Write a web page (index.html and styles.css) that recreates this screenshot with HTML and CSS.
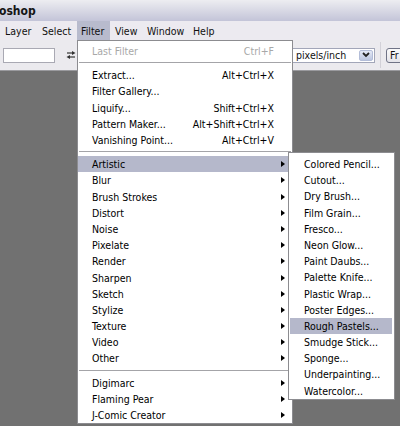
FILE: index.html
```html
<!DOCTYPE html>
<html>
<head>
<meta charset="utf-8">
<title>Filter menu</title>
<link rel="stylesheet" href="styles.css">
</head>
<body>
<div class="app">
  <div class="titlebar"><span class="title">oshop</span></div>
  <div class="menubar">
    <span class="mb-item">Layer</span>
    <span class="mb-item">Select</span>
    <span class="mb-item active">Filter</span>
    <span class="mb-item">View</span>
    <span class="mb-item">Window</span>
    <span class="mb-item">Help</span>
  </div>
  <div class="toolbar">
    <div class="field"></div>
    <svg class="swap" width="10" height="10" viewBox="0 0 10 10">
      <path d="M1 3H8" stroke="#333" stroke-width="1.2"/>
      <path d="M6 1L9.5 3L6 5Z" fill="#333"/>
      <path d="M2 7H9" stroke="#333" stroke-width="1.2"/>
      <path d="M4 5L0.5 7L4 9Z" fill="#333"/>
    </svg>
    <div class="select">
      <span class="select-text">pixels/inch</span>
      <span class="dd">
        <svg width="8" height="6" viewBox="0 0 8 6"><path d="M1 1L4 4L7 1" fill="none" stroke="#222" stroke-width="1.8"/></svg>
      </span>
    </div>
    <div class="tsep"></div>
    <div class="btn">Fr</div>
  </div>
  <div class="workspace"></div>

  <div class="menu main">
    <div class="mi disabled"><span class="label">Last Filter</span><span class="key">Ctrl+F</span><span class="arrcol"></span></div>
    <div class="sep"></div>
    <div class="mi"><span class="label">Extract...</span><span class="key">Alt+Ctrl+X</span><span class="arrcol"></span></div>
    <div class="mi"><span class="label">Filter Gallery...</span><span class="key"></span><span class="arrcol"></span></div>
    <div class="mi"><span class="label">Liquify...</span><span class="key">Shift+Ctrl+X</span><span class="arrcol"></span></div>
    <div class="mi"><span class="label">Pattern Maker...</span><span class="key">Alt+Shift+Ctrl+X</span><span class="arrcol"></span></div>
    <div class="mi"><span class="label">Vanishing Point...</span><span class="key">Alt+Ctrl+V</span><span class="arrcol"></span></div>
    <div class="sep"></div>
    <div class="mi hl"><span class="label">Artistic</span><span class="key"></span><span class="arrcol"><i class="arr"></i></span></div>
    <div class="mi"><span class="label">Blur</span><span class="key"></span><span class="arrcol"><i class="arr"></i></span></div>
    <div class="mi"><span class="label">Brush Strokes</span><span class="key"></span><span class="arrcol"><i class="arr"></i></span></div>
    <div class="mi"><span class="label">Distort</span><span class="key"></span><span class="arrcol"><i class="arr"></i></span></div>
    <div class="mi"><span class="label">Noise</span><span class="key"></span><span class="arrcol"><i class="arr"></i></span></div>
    <div class="mi"><span class="label">Pixelate</span><span class="key"></span><span class="arrcol"><i class="arr"></i></span></div>
    <div class="mi"><span class="label">Render</span><span class="key"></span><span class="arrcol"><i class="arr"></i></span></div>
    <div class="mi"><span class="label">Sharpen</span><span class="key"></span><span class="arrcol"><i class="arr"></i></span></div>
    <div class="mi"><span class="label">Sketch</span><span class="key"></span><span class="arrcol"><i class="arr"></i></span></div>
    <div class="mi"><span class="label">Stylize</span><span class="key"></span><span class="arrcol"><i class="arr"></i></span></div>
    <div class="mi"><span class="label">Texture</span><span class="key"></span><span class="arrcol"><i class="arr"></i></span></div>
    <div class="mi"><span class="label">Video</span><span class="key"></span><span class="arrcol"><i class="arr"></i></span></div>
    <div class="mi"><span class="label">Other</span><span class="key"></span><span class="arrcol"><i class="arr"></i></span></div>
    <div class="sep"></div>
    <div class="mi"><span class="label">Digimarc</span><span class="key"></span><span class="arrcol"><i class="arr"></i></span></div>
    <div class="mi"><span class="label">Flaming Pear</span><span class="key"></span><span class="arrcol"><i class="arr"></i></span></div>
    <div class="mi"><span class="label">J-Comic Creator</span><span class="key"></span><span class="arrcol"><i class="arr"></i></span></div>
  </div>

  <div class="menu sub">
    <div class="si">Colored Pencil...</div>
    <div class="si">Cutout...</div>
    <div class="si">Dry Brush...</div>
    <div class="si">Film Grain...</div>
    <div class="si">Fresco...</div>
    <div class="si">Neon Glow...</div>
    <div class="si">Paint Daubs...</div>
    <div class="si">Palette Knife...</div>
    <div class="si">Plastic Wrap...</div>
    <div class="si">Poster Edges...</div>
    <div class="si hl">Rough Pastels...</div>
    <div class="si">Smudge Stick...</div>
    <div class="si">Sponge...</div>
    <div class="si">Underpainting...</div>
    <div class="si">Watercolor...</div>
  </div>
</div>
</body>
</html>
```
FILE: styles.css
```css
* { box-sizing: border-box; margin: 0; padding: 0; }
html, body { width: 400px; height: 426px; overflow: hidden; }
body {
  background: #707070;
  font-family: "DejaVu Sans Condensed", "DejaVu Sans", sans-serif;
  font-stretch: condensed;
  font-size: 10.5px;
  color: #000;
}
.app {
  position: relative;
  width: 400px;
  height: 426px;
  display: flex;
  flex-direction: column;
}
.titlebar {
  height: 21px;
  flex: none;
  background: linear-gradient(#ededf1, #c3c4d8);
  display: flex;
  align-items: center;
}
.title {
  font-weight: bold;
  font-size: 12px;
  color: #151515;
  margin-left: -1px;
}
.menubar {
  height: 19px;
  flex: none;
  background: #eceaf0;
  display: grid;
  grid-template-columns: 37px 40px 33px 32px 46px 1fr;
}
.mb-item {
  display: flex;
  align-items: center;
  padding-left: 5px;
  color: #111;
}
.mb-item.active {
  background: #b8bbcd;
  padding-left: 4px;
}
.toolbar {
  height: 31px;
  flex: none;
  background: #ebeaee;
  border-bottom: 1px solid #9a9a9e;
  display: flex;
  align-items: center;
}
.field {
  flex: none;
  margin-left: 3px;
  width: 52px;
  height: 15px;
  background: #fff;
  border: 1px solid #a9a9b3;
}
.swap {
  flex: none;
  margin-left: 11px;
}
.select {
  flex: none;
  margin-left: 216px;
  width: 83px;
  height: 15px;
  background: #fff;
  border: 1px solid #a2a6b8;
  display: flex;
  align-items: center;
  justify-content: space-between;
  padding: 0 1px 0 3px;
}
.select-text {
  font-size: 10.5px;
  color: #111;
}
.dd {
  width: 14px;
  height: 11px;
  background: linear-gradient(#e4e9f6, #bcc6e0);
  border: 1px solid #b3bdd8;
  border-radius: 2px;
  display: flex;
  align-items: center;
  justify-content: center;
}
.tsep {
  flex: none;
  width: 1px;
  height: 26px;
  margin-left: 5px;
  background: #d2d1d8;
}
.btn {
  flex: none;
  margin-left: 5px;
  width: 30px;
  height: 15px;
  border: 1px solid #6f7386;
  border-radius: 3px;
  background: linear-gradient(#fafafa, #e4e4ea);
  padding-left: 3px;
  display: flex;
  align-items: center;
  color: #111;
}
.workspace {
  flex: 1;
  background: #717171;
}

.menu {
  position: absolute;
  background: #fff;
  border: 1px solid #8c8c90;
}
.main {
  left: 77px;
  top: 40px;
  width: 216px;
  padding-top: 2px;
}
.mi {
  height: 16.2px;
  display: grid;
  grid-template-columns: 1fr auto 11px;
  align-items: center;
  padding-left: 14px;
  padding-right: 7px;
  white-space: nowrap;
}
.mi.disabled { color: #a8a8a8; }
.hl { background: #b5b8cb; }
.key { text-align: right; }
.arrcol {
  display: flex;
  justify-content: flex-end;
  align-items: center;
}
.arr {
  display: block;
  width: 0;
  height: 0;
  border-top: 3.5px solid transparent;
  border-bottom: 3.5px solid transparent;
  border-left: 4px solid #000;
}
.sep {
  height: 8px;
  padding-top: 3px;
  margin: 0 1px;
}
.sep::before {
  content: "";
  display: block;
  height: 1px;
  background: #a4a4a8;
}
.sub {
  left: 288px;
  top: 152px;
  width: 107px;
  padding: 3px 2px 0 1px;
}
.si {
  height: 16.2px;
  line-height: 16.2px;
  padding-left: 14px;
  white-space: nowrap;
}
```
